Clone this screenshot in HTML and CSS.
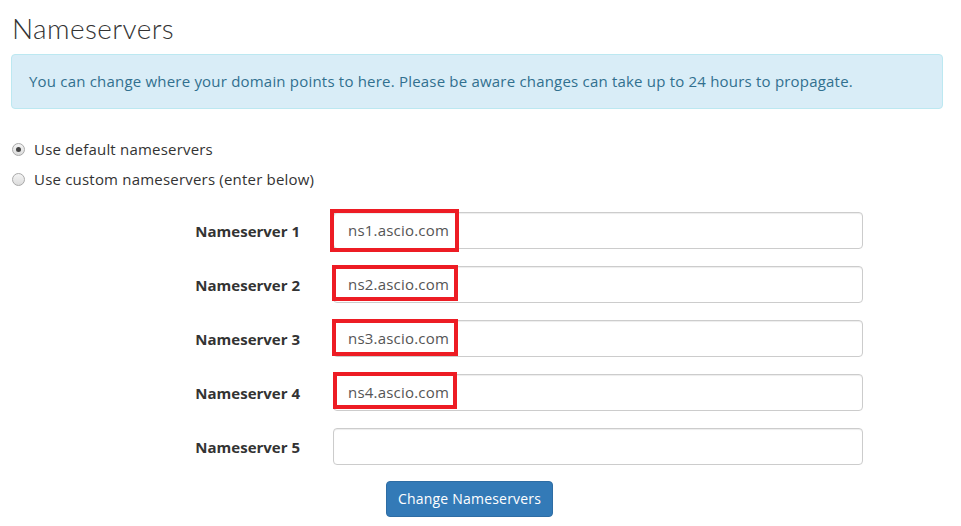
FILE: index.html
```html
<!DOCTYPE html>
<html>
<head>
<meta charset="utf-8">
<link rel="stylesheet" href="styles.css">
</head>
<body>
<div class="page">
  <h1 class="title">Nameservers</h1>
  <div class="alert">You can change where your domain points to here. Please be aware changes can take up to 24 hours to propagate.</div>

  <div class="radios">
    <label class="radio"><span class="dot checked"></span>Use default nameservers</label>
    <label class="radio"><span class="dot"></span>Use custom nameservers (enter below)</label>
  </div>

  <div class="form">
    <div class="label">Nameserver 1</div>
    <div class="field"><div class="input">ns1.ascio.com</div><div class="mark m1"></div></div>
    <div class="label">Nameserver 2</div>
    <div class="field"><div class="input">ns2.ascio.com</div><div class="mark m2"></div></div>
    <div class="label">Nameserver 3</div>
    <div class="field"><div class="input">ns3.ascio.com</div><div class="mark m3"></div></div>
    <div class="label">Nameserver 4</div>
    <div class="field"><div class="input">ns4.ascio.com</div><div class="mark m4"></div></div>
    <div class="label">Nameserver 5</div>
    <div class="field"><div class="input"></div></div>
  </div>

  <div class="actions"><button class="btn">Change Nameservers</button></div>
</div>
</body>
</html>
```
FILE: styles.css
```css
html, body {
  margin: 0;
  padding: 0;
  background: #fff;
}
body {
  font-family: "Open Sans", "Liberation Sans", sans-serif;
  font-size: 15px;
  letter-spacing: 0.2px;
  color: #333;
}
.page {
  padding: 0 18px 0 11px;
}
.title {
  margin: 0;
  padding-top: 12px;
  padding-left: 1px;
  font-family: "Lato", "Open Sans", sans-serif;
  font-weight: 300;
  font-size: 28px;
  letter-spacing: 0.4px;
  line-height: 32px;
  color: #333;
}
.alert {
  margin-top: 10px;
  background: #d9edf7;
  border: 1px solid #bce8f1;
  border-radius: 4px;
  color: #31708f;
  padding: 16px 17px;
  line-height: 21px;
}
.radios {
  margin-top: 30px;
  display: flex;
  flex-direction: column;
  gap: 10px;
}
.radio {
  display: flex;
  align-items: center;
  height: 20px;
  color: #333;
}
.dot {
  width: 11px;
  height: 11px;
  border-radius: 50%;
  border: 1px solid #a9a9a9;
  background: linear-gradient(#f4f4f4, #dcdcdc);
  margin-left: 1px;
  margin-right: 9px;
  position: relative;
  flex: none;
}
.dot.checked::after {
  content: "";
  position: absolute;
  left: 3px;
  top: 3px;
  width: 5px;
  height: 5px;
  border-radius: 50%;
  background: #444;
}
.form {
  margin-top: 23px;
  display: grid;
  grid-template-columns: 289px 530px;
  column-gap: 33px;
  row-gap: 17px;
  align-items: center;
}
.label {
  text-align: right;
  font-weight: 700;
  letter-spacing: 0;
  color: #333;
}
.field {
  position: relative;
}
.input {
  height: 37px;
  box-sizing: border-box;
  border: 1px solid #ccc;
  border-radius: 4px;
  padding: 0 12px 0 14px;
  line-height: 35px;
  color: #555;
  box-shadow: inset 0 1px 1px rgba(0,0,0,.075);
}
.mark {
  position: absolute;
  box-sizing: border-box;
  border: 4px solid #ed1c24;
}
.m1 { left: -3px; top: -3px; width: 129px; height: 43px; }
.m2 { left: -1px; top: -1px; width: 126px; height: 36px; }
.m3 { left: -1px; top: -1px; width: 126px; height: 37px; }
.m4 { left: 0; top: -2px; width: 124px; height: 37px; }
.actions {
  margin-top: 16px;
  padding-left: 375px;
}
.btn {
  font-family: "Open Sans", "Liberation Sans", sans-serif;
  font-size: 14px;
  letter-spacing: 0.2px;
  color: #fff;
  background: #337ab7;
  border: 1px solid #2e6da4;
  border-radius: 4px;
  height: 36px;
  padding: 0 11px;
  line-height: 34px;
}
```
